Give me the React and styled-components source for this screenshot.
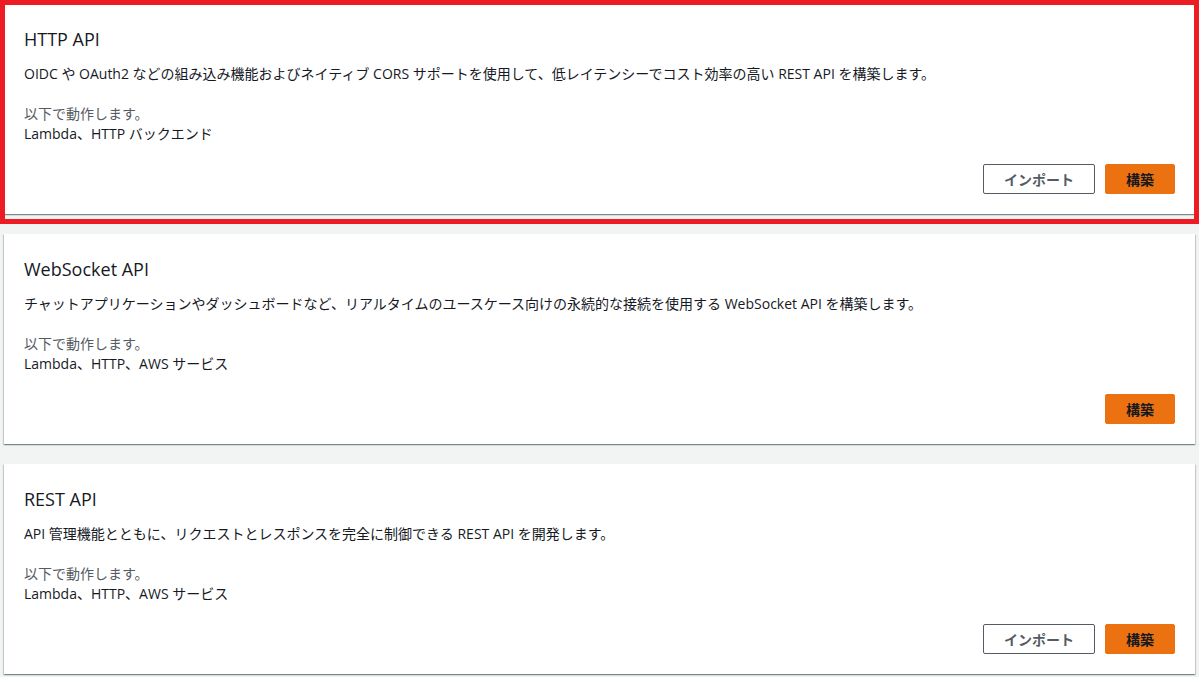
import React from "react";
import styled, { createGlobalStyle } from "styled-components";

const Global = createGlobalStyle`
  html, body { margin: 0; padding: 0; background: #f2f3f3; }
  body { font-family: "Open Sans", "Noto Sans CJK JP", sans-serif; color: #16191f; -webkit-font-smoothing: antialiased; }
`;

const Page = styled.div`
  position: relative;
  padding: 4px;
  display: flex;
  flex-direction: column;
  gap: 20px;
`;

const Card = styled.section`
  background: #fff;
  height: 210px;
  box-sizing: border-box;
  padding: 20px;
  display: flex;
  flex-direction: column;
  box-shadow: 0 1px 1px 0 rgba(0, 28, 36, 0.3), 1px 1px 1px 0 rgba(0, 28, 36, 0.15),
    -1px 1px 1px 0 rgba(0, 28, 36, 0.15);
`;

const Title = styled.h2`
  margin: 0;
  font-size: 18px;
  line-height: 30px;
  font-weight: 400;
  color: #16191f;
`;

const Desc = styled.p`
  margin: 10px 0 0;
  font-size: 14px;
  line-height: 20px;
`;

const WorksWith = styled.div`
  margin-top: 20px;
  font-size: 14px;
  line-height: 20px;
`;

const Label = styled.div`
  color: #545b64;
`;

const Value = styled.div`
  color: #16191f;
`;

const Actions = styled.div`
  margin-top: auto;
  display: flex;
  justify-content: flex-end;
  gap: 10px;
`;

const Button = styled.button`
  height: 30px;
  box-sizing: border-box;
  padding: 0 20px;
  border-radius: 2px;
  font-family: inherit;
  font-size: 14px;
  font-weight: 700;
  cursor: pointer;
  border: 1px solid ${(p) => (p.$primary ? "#ec7211" : "#545b64")};
  background: ${(p) => (p.$primary ? "#ec7211" : "#fff")};
  color: ${(p) => (p.$primary ? "#16191f" : "#545b64")};
`;

const Highlight = styled.div`
  position: absolute;
  left: 0;
  top: 0;
  width: 1199px;
  height: 224px;
  box-sizing: border-box;
  border: 5px solid #ed1c24;
  pointer-events: none;
`;

const apis = [
  {
    title: "HTTP API",
    desc: "OIDC や OAuth2 などの組み込み機能およびネイティブ CORS サポートを使用して、低レイテンシーでコスト効率の高い REST API を構築します。",
    works: "Lambda、HTTP バックエンド",
    importable: true,
  },
  {
    title: "WebSocket API",
    desc: "チャットアプリケーションやダッシュボードなど、リアルタイムのユースケース向けの永続的な接続を使用する WebSocket API を構築します。",
    works: "Lambda、HTTP、AWS サービス",
    importable: false,
  },
  {
    title: "REST API",
    desc: "API 管理機能とともに、リクエストとレスポンスを完全に制御できる REST API を開発します。",
    works: "Lambda、HTTP、AWS サービス",
    importable: true,
  },
];

export default function App() {
  return (
    <>
      <Global />
      <Page>
        {apis.map((a) => (
          <Card key={a.title}>
            <Title>{a.title}</Title>
            <Desc>{a.desc}</Desc>
            <WorksWith>
              <Label>以下で動作します。</Label>
              <Value>{a.works}</Value>
            </WorksWith>
            <Actions>
              {a.importable && <Button>インポート</Button>}
              <Button $primary>構築</Button>
            </Actions>
          </Card>
        ))}
        <Highlight />
      </Page>
    </>
  );
}
